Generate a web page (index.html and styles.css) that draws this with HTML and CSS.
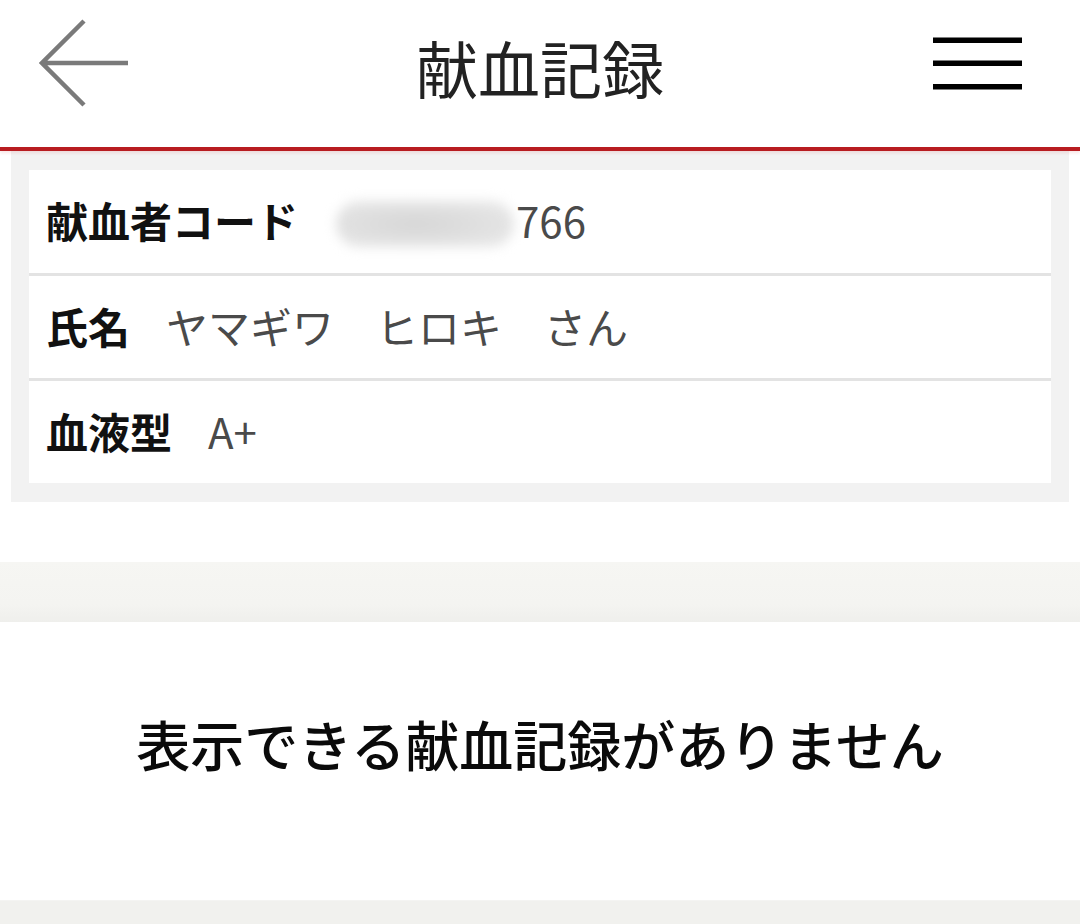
FILE: index.html
```html
<!DOCTYPE html>
<html lang="ja">
<head>
<meta charset="utf-8">
<title>献血記録</title>
<link rel="stylesheet" href="styles.css">
</head>
<body>
<header class="topbar">
  <svg class="back" width="90" height="90" viewBox="-1 -1 90 90" aria-label="戻る">
    <path d="M44 2 L2 44 L44 86 M2 44 H88" fill="none" stroke="#7a7a7a" stroke-width="4.5" stroke-linecap="butt" stroke-linejoin="miter"/>
  </svg>
  <h1 class="title">献血記録</h1>
  <svg class="menu" width="89" height="56" viewBox="0 0 89 56" aria-label="メニュー">
    <rect x="0" y="2.5" width="89" height="5.5" fill="#000"/>
    <rect x="0" y="25.5" width="89" height="5.5" fill="#000"/>
    <rect x="0" y="49" width="89" height="5.5" fill="#000"/>
  </svg>
</header>

<section class="profile">
  <div class="card">
    <div class="row">
      <span class="label">献血者コード</span>
      <span class="value"><span class="masked"><span class="blob"></span></span>766</span>
    </div>
    <div class="row">
      <span class="label">氏名</span>
      <span class="value">ヤマギワ　ヒロキ　さん</span>
    </div>
    <div class="row">
      <span class="label">血液型</span>
      <span class="value">A+</span>
    </div>
  </div>
</section>

<div class="spacer"></div>
<div class="band"></div>

<section class="empty">
  <p class="empty-text">表示できる献血記録がありません</p>
</section>

<div class="band-bottom"></div>
</body>
</html>
```

FILE: styles.css
```css
html, body {
  margin: 0;
  padding: 0;
  background: #ffffff;
}

body {
  font-family: "Noto Sans CJK JP", "Noto Sans", sans-serif;
  color: #111;
  width: 1080px;
  overflow: hidden;
}

.topbar {
  height: 151px;
  box-sizing: border-box;
  display: grid;
  grid-template-columns: 1fr auto 1fr;
  align-items: center;
  padding: 0 40px 22px 40px;
  border-bottom: 4px solid #b81c20;
  box-shadow: 0 2px 3px rgba(200, 40, 40, 0.12);
  position: relative;
  z-index: 1;
}

.back {
  display: block;
  justify-self: start;
  margin-left: -1px;
}

.title {
  margin: 9px 0 0 0;
  font-size: 62px;
  font-weight: 400;
  line-height: 1.2;
  color: #222;
  letter-spacing: 0;
}

.menu {
  display: block;
  justify-self: end;
  margin-right: 18px;
}

.profile {
  margin: 0 11px;
  padding: 19px 18px 19px 18px;
  background: #f2f2f2;
}

.card {
  background: #fff;
  display: flex;
  flex-direction: column;
}

.row {
  display: flex;
  align-items: center;
  height: 102px;
  padding-left: 17px;
  border-top: 3px solid #e3e3e3;
}

.row:first-child {
  border-top: none;
  height: 103px;
}

.label {
  font-size: 42px;
  font-weight: 700;
  color: #111;
  margin-right: 36px;
  white-space: nowrap;
  margin-top: -4px;
}

.value {
  font-size: 42px;
  font-weight: 400;
  color: #4a4a4a;
  white-space: pre;
  display: flex;
  align-items: center;
  margin-top: -4px;
}

.masked {
  display: inline-block;
  width: 182px;
  height: 50px;
  position: relative;
  margin-top: 8px;
}

.blob {
  position: absolute;
  left: 2px;
  top: 2px;
  right: 2px;
  bottom: 2px;
  border-radius: 25px;
  background: radial-gradient(ellipse at 45% 50%, #d6d6d6 0%, #e0e0e0 50%, #ebebeb 100%);
  filter: blur(6px);
}

.spacer {
  height: 60px;
}

.band {
  height: 60px;
  background: linear-gradient(to bottom, #f6f6f3 0%, #f4f4f1 70%, #efefec 100%);
}

.empty {
  height: 278px;
  box-sizing: border-box;
  padding-top: 84px;
}

.empty-text {
  margin: 0;
  text-align: center;
  font-size: 54px;
  font-weight: 500;
  line-height: 1.4;
  color: #0a0a0a;
}

.band-bottom {
  height: 40px;
  background: #f1f1ee;
  border-top: 1px solid #f4f4f2;
}
```
